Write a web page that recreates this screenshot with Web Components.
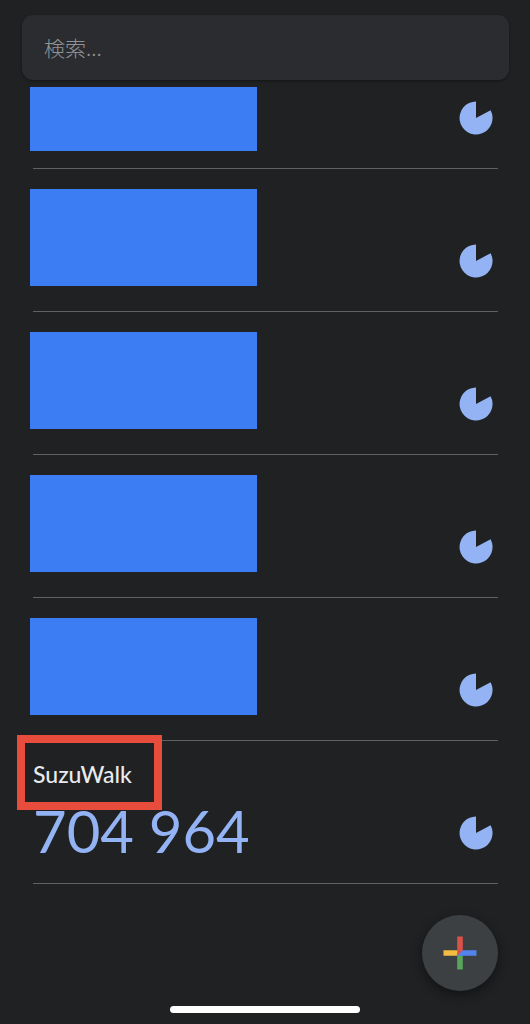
<!DOCTYPE html>
<html lang="ja">
<head>
<meta charset="utf-8">
<meta name="viewport" content="width=device-width, initial-scale=1">
<title>Authenticator</title>
<style>
	body {
		margin: 0;
		background: #202123;
		font-family: Lato, "Noto Sans CJK JP", sans-serif;
	}
</style>
</head>
<body>
<auth-app>
	<search-bar slot="header" placeholder="検索..."></search-bar>
	<code-row clipped><masked-block></masked-block></code-row>
	<code-row><masked-block></masked-block></code-row>
	<code-row><masked-block></masked-block></code-row>
	<code-row><masked-block></masked-block></code-row>
	<code-row><masked-block></masked-block></code-row>
	<code-row>
		<account-code marked>
			<span slot="name">SuzuWalk</span>
			<span slot="code">704 964</span>
		</account-code>
	</code-row>
	<add-button slot="action"></add-button>
</auth-app>

<script>
const html = String.raw;

const define = (name, markup, setup) => {
	const template = document.createElement("template");
	template.innerHTML = markup;
	customElements.define(
		name,
		class extends HTMLElement {
			constructor() {
				super();
				this.attachShadow({ mode: "open" });
				this.shadowRoot.appendChild(template.content.cloneNode(true));
			}

			connectedCallback() {
				setup?.(this);
			}
		},
	);
};

define("search-bar", html`
	<style>
		:host {
			display: block;
			padding: 15px 21px 0 22px;
		}
		input {
			box-sizing: border-box;
			display: block;
			width: 100%;
			height: 65px;
			padding: 0 22px 2px;
			border: 0;
			border-radius: 11px;
			outline: 0;
			background: #2b2c2f;
			box-shadow: 0 1px 3px #0006;
			color: #e8eaed;
			font: 300 21px "Noto Sans CJK JP", sans-serif;
		}
		input::placeholder {
			color: #929395;
			opacity: 1;
		}
	</style>
	<input type="text">
`, (el) => {
	const input = el.shadowRoot.querySelector("input");
	input.placeholder = el.getAttribute("placeholder");
	input.setAttribute("aria-label", input.placeholder);
});

define("countdown-pie", html`
	<style>
		:host {
			display: block;
			width: 34px;
			height: 34px;
		}
		svg {
			display: block;
		}
	</style>
	<svg width="34" height="34" viewBox="0 0 34 34" aria-hidden="true">
		<path d="M17 17V.5A16.5 16.5 0 1 0 31.6 9.2Z" fill="#93b3f4"/>
	</svg>
`);

define("code-row", html`
	<style>
		:host {
			display: flex;
			box-sizing: border-box;
			justify-content: space-between;
			align-items: flex-end;
			min-height: 143px;
			padding: 20px 5px 0 0;
			border-bottom: 1px solid #5f6165;
		}
		/* partly scrolled away under the search bar */
		:host([clipped]) {
			--mask-height: 64px;
			--mask-gap: 17px;
			min-height: 0;
			padding-top: 7px;
		}
		countdown-pie {
			flex: none;
			margin-bottom: 33px;
		}
	</style>
	<slot></slot>
	<countdown-pie></countdown-pie>
`);

define("masked-block", html`
	<style>
		:host {
			display: block;
			width: 227px;
			height: var(--mask-height, 97px);
			margin: 0 0 var(--mask-gap, 25px) -3px;
			background: #3c7df3;
		}
	</style>
`);

define("account-code", html`
	<style>
		:host {
			display: block;
			position: relative;
			align-self: flex-start;
		}
		.name {
			color: #e8eaed;
			font-size: 23px;
			font-weight: 500;
			line-height: 26px;
		}
		.code {
			color: #93b3f4;
			font-size: 58px;
			line-height: 70px;
			margin-top: 9px;
			white-space: nowrap;
		}
		.marker {
			display: none;
			box-sizing: border-box;
			position: absolute;
			left: -16px;
			top: -26px;
			width: 145px;
			height: 75px;
			border: 8px solid #e74c3c;
		}
		:host([marked]) .marker {
			display: block;
		}
	</style>
	<div class="name"><slot name="name"></slot></div>
	<div class="code"><slot name="code"></slot></div>
	<div class="marker"></div>
`);

define("add-button", html`
	<style>
		:host {
			display: block;
		}
		button {
			display: grid;
			place-items: center;
			width: 76px;
			height: 76px;
			padding: 0;
			border: 0;
			border-radius: 50%;
			background: #3d4043;
			box-shadow: 0 4px 12px #0007;
			cursor: pointer;
		}
	</style>
	<button type="button" aria-label="追加">
		<svg width="34" height="34" viewBox="0 0 34 34" aria-hidden="true">
			<path d="M.5 14.2H17L14.2 19.8H.5Z" fill="#f2bd42"/>
			<path d="M14.2 17H19.8V33.5H14.2Z" fill="#58a55c"/>
			<path d="M17 14.2H33.5V19.8H14.2Z" fill="#5383ec"/>
			<path d="M14.2.5H19.8V14.2L14.2 19.8Z" fill="#d8524a"/>
		</svg>
	</button>
`);

define("auth-app", html`
	<style>
		:host {
			display: block;
			min-height: 100vh;
		}
		main {
			padding: 0 32px 140px 33px;
		}
		.action {
			position: fixed;
			right: 32px;
			bottom: 33px;
		}
		.home {
			position: fixed;
			inset: auto 0 11px;
			width: 36%;
			height: 7px;
			margin: 0 auto;
			border-radius: 4px;
			background: #fff;
		}
	</style>
	<header><slot name="header"></slot></header>
	<main><slot></slot></main>
	<div class="action"><slot name="action"></slot></div>
	<div class="home"></div>
`);
</script>
</body>
</html>
